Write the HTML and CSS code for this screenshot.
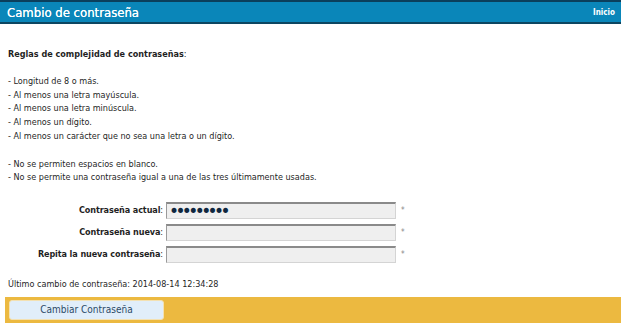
FILE: index.html
```html
<!DOCTYPE html>
<html>
<head>
    <meta charset="utf-8">
    <link rel="stylesheet" href="styles.css">
</head>
<body>
    <div class="topbar">
        <h1>Cambio de contraseña</h1>
        <a class="home" href="#">Inicio</a>
    </div>

    <div class="content">
        <p class="rules-title"><b>Reglas de complejidad de contraseñas</b>:</p>

        <ul class="rules">
            <li>- Longitud de 8 o más.</li>
            <li>- Al menos una letra mayúscula.</li>
            <li>- Al menos una letra minúscula.</li>
            <li>- Al menos un dígito.</li>
            <li>- Al menos un carácter que no sea una letra o un dígito.</li>
        </ul>

        <ul class="rules">
            <li>- No se permiten espacios en blanco.</li>
            <li>- No se permite una contraseña igual a una de las tres últimamente usadas.</li>
        </ul>

        <form class="pwd-form">
            <label for="current"><b>Contraseña actual</b>:</label>
            <input type="password" id="current" value="123456789">
            <span class="req">*</span>

            <label for="newpwd"><b>Contraseña nueva</b>:</label>
            <input type="password" id="newpwd">
            <span class="req">*</span>

            <label for="repeat"><b>Repita la nueva contraseña</b>:</label>
            <input type="password" id="repeat">
            <span class="req">*</span>
        </form>

        <p class="last-change">Último cambio de contraseña: 2014-08-14 12:34:28</p>
    </div>

    <div class="actions">
        <button type="button">Cambiar Contraseña</button>
    </div>
</body>
</html>
```

FILE: styles.css
```css
html {
    background: #fff;
}

body {
    margin: 0;
    font-family: "DejaVu Sans", sans-serif;
    font-stretch: condensed;
    font-size: 9px;
    color: #1f1f1f;
}

.topbar {
    display: flex;
    align-items: center;
    justify-content: space-between;
    height: 20px;
    padding: 0 6px 0 7px;
    background: #0a86b9;
    border-top: 2px solid #0b3f5c;
    border-bottom: 2px solid #0d4661;
}

.topbar h1 {
    margin: 0;
    font-size: 13px;
    font-weight: normal;
    color: #fff;
    text-shadow: 0 0 0.4px #fff;
}

.home {
    color: #fff;
    font-weight: bold;
    font-size: 8px;
    text-decoration: none;
}

.content {
    padding: 0 8px;
}

.rules-title {
    margin: 23px 0 0;
    line-height: 14px;
}

.rules {
    list-style: none;
    margin: 14px 0 0;
    padding: 0;
    line-height: 13.7px;
}

.pwd-form {
    display: grid;
    grid-template-columns: 155px 230px auto;
    column-gap: 3px;
    row-gap: 5px;
    align-items: center;
    margin-top: 17px;
}

.pwd-form label {
    text-align: right;
    letter-spacing: -0.1px;
}

.pwd-form input {
    box-sizing: border-box;
    height: 17px;
    margin: 0;
    padding: 0 2px;
    background: #efefef;
    border: 1px solid #d4d4d4;
    border-top: 2px solid #8a8a8a;
    border-left: 1px solid #9a9a9a;
    font-family: "DejaVu Sans", sans-serif;
    font-size: 17px;
    line-height: 13px;
    letter-spacing: -3.6px;
    color: #0f2740;
}

.req {
    color: #888;
    font-size: 8px;
    padding-left: 2px;
}

.last-change {
    margin: 14px 0 0;
    line-height: 14px;
}

.actions {
    margin: 6px 0 4px 5px;
    padding: 3px 4px;
    background: #ecb940;
}

.actions button {
    display: block;
    width: 155px;
    height: 20px;
    background: #e1eefa;
    border: 1px solid #f3e1b3;
    border-radius: 3px;
    font-family: inherit;
    font-stretch: condensed;
    font-size: 10px;
    color: #2c4a67;
}
```
